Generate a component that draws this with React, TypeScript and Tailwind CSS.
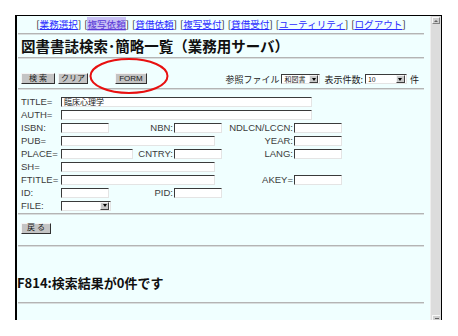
import React from 'react';

const sans = { fontFamily: '"Liberation Sans", "Noto Sans CJK JP", sans-serif' };
const jp = { fontFamily: '"Noto Sans CJK JP", sans-serif' };

function Rule({ className = '' }: { className?: string }) {
  return <div className={`h-[2px] bg-[#b4b4b4] border-b border-[#d8dede] ${className}`} />;
}

function Btn({ label, w }: { label: string; w: string }) {
  return (
    <div
      className={`${w} h-[11px] flex items-center justify-center bg-[#c4c4c4] border border-t-[#f4f4f4] border-l-[#f4f4f4] border-b-[#303030] border-r-[#303030] text-[8px] leading-none text-[#202020]`}
    >
      {label}
    </div>
  );
}

function Field({ w, value }: { w: string; value?: string }) {
  return (
    <div
      className={`${w} h-[10px] bg-white border-t border-l border-t-[#3a3a3a] border-l-[#3a3a3a] border-b border-r border-b-[#e4e4e4] border-r-[#e4e4e4] text-[8px] leading-[9px] pl-[2px] text-[#202020] overflow-hidden whitespace-nowrap`}
    >
      {value}
    </div>
  );
}

function Select({ w, value }: { w: string; value?: string }) {
  return (
    <div
      className={`${w} h-[10px] flex bg-white border-t border-l border-t-[#3a3a3a] border-l-[#3a3a3a] border-b border-r border-b-[#e4e4e4] border-r-[#e4e4e4]`}
    >
      <div className="flex-1 text-[7px] leading-[9px] pl-[2px] text-[#202020] whitespace-nowrap" style={jp}>
        {value}
      </div>
      <div className="w-[9px] h-[8px] mr-[1px] bg-[#c8c8c8] border border-t-[#f4f4f4] border-l-[#f4f4f4] border-b-[#404040] border-r-[#404040] flex items-center justify-center">
        <div className="w-0 h-0 border-l-[2.5px] border-r-[2.5px] border-t-[3px] border-l-transparent border-r-transparent border-t-black" />
      </div>
    </div>
  );
}

function Label({ text, className = '' }: { text: string; className?: string }) {
  return (
    <div className={`text-[9.5px] leading-none text-[#3c3c3c] whitespace-nowrap ${className}`}>
      {text}
    </div>
  );
}

const links = ['業務選択', '複写依頼', '貸借依頼', '複写受付', '貸借受付', 'ユーティリティ', 'ログアウト'];

export default function App() {
  return (
    <div className="w-[458px] h-[336px] bg-white pt-[15px] pl-[15px]" style={sans}>
      <div className="w-[427px] h-[305px] flex border-t border-l-2 border-r border-black">
        <div className="flex-1 bg-[#f0ffff] pl-[1px] pr-[6px] pt-[2px] text-[#202020]">
          {/* nav */}
          <div
            className="h-[13px] flex items-center justify-center gap-[3px] text-[9.6px] leading-none"
            style={jp}
          >
            {links.map((l, i) => (
              <span key={l} className="whitespace-nowrap">
                [
                <span
                  className={`underline ${i === 1 ? 'bg-[#c8c0f4] text-[#5a3ad8]' : 'text-[#2a2aff]'}`}
                >
                  {l}
                </span>
                ]
              </span>
            ))}
          </div>
          <Rule className="mt-[2px]" />

          <div
            className="h-[22px] flex items-center pl-[3px] text-[14.5px] font-bold leading-none text-[#101010]"
            style={jp}
          >
            図書書誌検索･簡略一覧（業務用サーバ）
          </div>
          <Rule />

          {/* buttons row */}
          <div className="relative h-[29px] flex items-end pb-[4px] pl-[3px]">
            <Btn label="検 索" w="w-[34px]" />
            <div className="w-[3px]" />
            <Btn label="クリア" w="w-[30px]" />
            <div className="w-[27px]" />
            <Btn label="FORM" w="w-[32px]" />
            <div
              className="ml-auto flex items-center gap-[2px] text-[9px] leading-none mr-[5px]"
              style={jp}
            >
              <span>参照ファイル</span>
              <Select w="w-[39px]" value="和図書" />
              <span className="ml-[2px]">表示件数:</span>
              <Select w="w-[42px]" value="10" />
              <span className="ml-[1px]">件</span>
            </div>
            <svg
              className="absolute left-[71px] top-[-2px]"
              width="80"
              height="38"
              viewBox="0 0 80 38"
            >
              <ellipse cx="40" cy="19" rx="38.5" ry="17" fill="none" stroke="#e81010" strokeWidth="2" />
            </svg>
          </div>
          <Rule />

          {/* search form */}
          <div className="grid grid-cols-[40px_77px_36px_48px_72px_49px] auto-rows-[13px] items-center pl-[3px] pt-[5px]">
            <Label text="TITLE=" />
            <div className="col-span-5">
              <Field w="w-[251px]" value="臨床心理学" />
            </div>

            <Label text="AUTH=" />
            <div className="col-span-5">
              <Field w="w-[251px]" />
            </div>

            <Label text="ISBN:" />
            <Field w="w-[48px]" />
            <Label text="NBN:" className="text-right pr-[1px]" />
            <Field w="w-[48px]" />
            <Label text="NDLCN/LCCN:" className="text-right pr-[1px]" />
            <Field w="w-[48px]" />

            <Label text="PUB=" />
            <div className="col-span-3">
              <Field w="w-[154px]" />
            </div>
            <Label text="YEAR:" className="text-right pr-[1px]" />
            <Field w="w-[48px]" />

            <Label text="PLACE=" />
            <Field w="w-[72px]" />
            <Label text="CNTRY:" className="text-right pr-[1px]" />
            <Field w="w-[48px]" />
            <Label text="LANG:" className="text-right pr-[1px]" />
            <Field w="w-[48px]" />

            <Label text="SH=" />
            <div className="col-span-5">
              <Field w="w-[154px]" />
            </div>

            <Label text="FTITLE=" />
            <div className="col-span-3">
              <Field w="w-[154px]" />
            </div>
            <Label text="AKEY=" className="text-right pr-[1px]" />
            <Field w="w-[48px]" />

            <Label text="ID:" />
            <Field w="w-[48px]" />
            <Label text="PID:" className="text-right pr-[1px]" />
            <Field w="w-[48px]" />
            <div className="col-span-2" />

            <Label text="FILE:" />
            <div className="col-span-5">
              <Select w="w-[50px]" />
            </div>
          </div>
          <Rule className="mt-[1px]" />

          <div className="h-[26px] flex items-center pl-[3px]">
            <Btn label="戻 る" w="w-[30px]" />
          </div>
          <Rule className="mt-[4px]" />

          <div
            className="h-[55px] flex items-center pt-[15px] text-[13px] font-bold leading-none text-[#101010] -ml-[1px]"
            style={jp}
          >
            F814:検索結果が0件です
          </div>
          <Rule />
        </div>

        {/* scrollbar */}
        <div className="w-[11px] flex flex-col bg-[#dcdcdc] border-l border-[#eeeeee]">
          <div className="h-[7px] mt-[1px] mx-[1px] bg-[#d0d0d0] border border-t-[#f8f8f8] border-l-[#f8f8f8] border-b-[#808080] border-r-[#808080] flex items-center justify-center">
            <div className="w-0 h-0 border-l-[2px] border-r-[2px] border-b-[2px] border-l-transparent border-r-transparent border-b-[#606060]" />
          </div>
          <div className="flex-1" />
          <div className="h-[5px] mx-[1px] bg-[#d0d0d0] border-t border-l border-[#f8f8f8] flex items-center justify-center">
            <div className="w-[4px] h-[1px] bg-[#606060]" />
          </div>
        </div>
      </div>
    </div>
  );
}
